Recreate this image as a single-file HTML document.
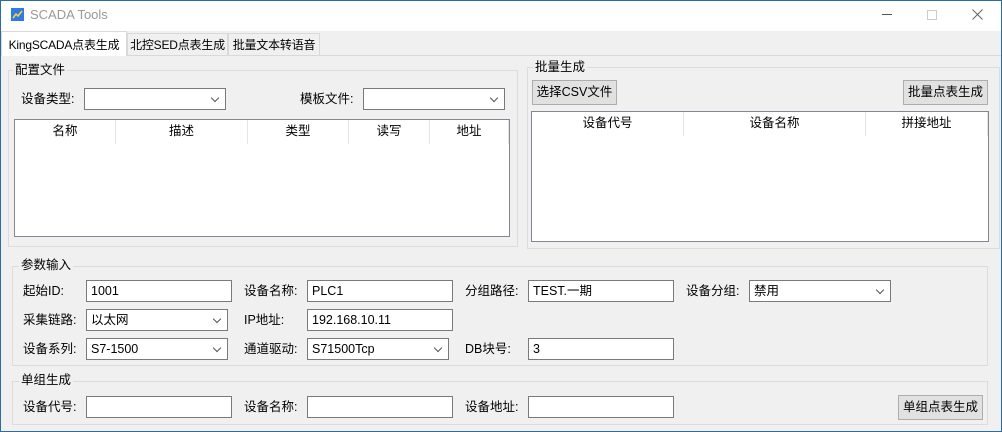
<!DOCTYPE html>
<html><head><meta charset="utf-8"><style>
*{box-sizing:border-box;margin:0;padding:0}
body{width:1002px;height:432px;overflow:hidden;background:#f0f0f0;font-family:"Liberation Sans","Noto Sans CJK SC",sans-serif;font-size:12.5px;color:#000;position:relative}
.a{position:absolute;white-space:nowrap}
.win{left:0;top:0;width:1002px;height:432px;border:1px solid #2b6ca6}
.title{left:1px;top:1px;width:1000px;height:30px;background:#fff}
.grp{border:1px solid #dcdcdc}
.gt{background:#f0f0f0;padding:0 2px;line-height:14px}
.inp{background:#fff;border:1px solid #7a7a7a;height:22px;line-height:20px;padding-left:4px}
.cmb:after{content:"";position:absolute;right:7px;top:6px;width:5px;height:5px;border-right:1px solid #555;border-bottom:1px solid #555;transform:rotate(45deg)}
.btn{background:#e1e1e1;border:1px solid #adadad;text-align:center;line-height:22px}
.tbl{background:#fff;border:1px solid #828790}
.th{position:absolute;top:0;height:24px;line-height:22px;text-align:center;border-right:1px solid #e5e5e5}
.lbl{line-height:22px}
.tab{top:33px;height:22px;line-height:22px;text-align:center;border:1px solid #d9d9d9;border-bottom:none;background:#f0f0f0;font-size:12px;letter-spacing:-0.2px}
</style></head><body>
<div class="a title"></div>
<div class="a win"></div>
<svg class="a" style="left:11px;top:8px" width="13" height="13"><rect width="13" height="13" fill="#2f7ae5"/><path d="M2 10 L5 6 L7 8 L11 3" stroke="#ffd633" stroke-width="1.5" fill="none"/></svg>
<div class="a" style="left:30px;top:7px;color:#999;font-size:13px">SCADA Tools</div>
<div class="a" style="left:882px;top:14px;width:10px;height:1px;background:#555"></div>
<div class="a" style="left:927px;top:10px;width:10px;height:10px;border:1px solid #ccc"></div>
<svg class="a" style="left:972px;top:9px" width="11" height="11"><path d="M0.5 0.5 L10.5 10.5 M10.5 0.5 L0.5 10.5" stroke="#666" stroke-width="1"/></svg>
<div class="a" style="left:1px;top:55px;width:1000px;height:1px;background:#d9d9d9"></div>
<div class="a tab" style="left:127px;width:101px">北控SED点表生成</div>
<div class="a tab" style="left:228px;width:92px">批量文本转语音</div>
<div class="a tab" style="left:1px;top:31px;width:126px;height:25px;background:#fff;line-height:26px">KingSCADA点表生成</div>

<div class="a grp" style="left:8px;top:70px;width:510px;height:177px"></div>
<div class="a gt" style="left:13px;top:63px">配置文件</div>
<div class="a lbl" style="left:21px;top:88px">设备类型:</div>
<div class="a inp cmb" style="left:84px;top:88px;width:142px"></div>
<div class="a lbl" style="left:300px;top:88px">模板文件:</div>
<div class="a inp cmb" style="left:363px;top:88px;width:142px"></div>
<div class="a tbl" style="left:14px;top:119px;width:496px;height:118px">
<div class="th" style="left:0;width:101px">名称</div>
<div class="th" style="left:101px;width:132px">描述</div>
<div class="th" style="left:233px;width:101px">类型</div>
<div class="th" style="left:334px;width:81px">读写</div>
<div class="th" style="left:415px;width:79px">地址</div>
</div>

<div class="a grp" style="left:527px;top:67px;width:473px;height:182px"></div>
<div class="a gt" style="left:533px;top:60px">批量生成</div>
<div class="a btn" style="left:532px;top:80px;width:85px;height:25px">选择CSV文件</div>
<div class="a btn" style="left:903px;top:80px;width:85px;height:25px">批量点表生成</div>
<div class="a tbl" style="left:531px;top:111px;width:458px;height:131px">
<div class="th" style="left:0;width:152px">设备代号</div>
<div class="th" style="left:152px;width:182px">设备名称</div>
<div class="th" style="left:334px;width:122px">拼接地址</div>
</div>

<div class="a grp" style="left:12px;top:266px;width:976px;height:100px"></div>
<div class="a gt" style="left:19px;top:258px">参数输入</div>
<div class="a lbl" style="left:23px;top:280px">起始ID:</div>
<div class="a inp" style="left:86px;top:280px;width:146px">1001</div>
<div class="a lbl" style="left:244px;top:280px">设备名称:</div>
<div class="a inp" style="left:307px;top:280px;width:146px">PLC1</div>
<div class="a lbl" style="left:465px;top:280px">分组路径:</div>
<div class="a inp" style="left:528px;top:280px;width:146px">TEST.一期</div>
<div class="a lbl" style="left:686px;top:280px">设备分组:</div>
<div class="a inp cmb" style="left:749px;top:280px;width:142px">禁用</div>
<div class="a lbl" style="left:23px;top:309px">采集链路:</div>
<div class="a inp cmb" style="left:86px;top:309px;width:142px">以太网</div>
<div class="a lbl" style="left:244px;top:309px">IP地址:</div>
<div class="a inp" style="left:307px;top:309px;width:146px">192.168.10.11</div>
<div class="a lbl" style="left:23px;top:338px">设备系列:</div>
<div class="a inp cmb" style="left:86px;top:338px;width:142px">S7-1500</div>
<div class="a lbl" style="left:244px;top:338px">通道驱动:</div>
<div class="a inp cmb" style="left:307px;top:338px;width:142px">S71500Tcp</div>
<div class="a lbl" style="left:465px;top:338px">DB块号:</div>
<div class="a inp" style="left:528px;top:338px;width:146px">3</div>

<div class="a grp" style="left:12px;top:381px;width:976px;height:44px"></div>
<div class="a gt" style="left:19px;top:373px">单组生成</div>
<div class="a lbl" style="left:23px;top:396px">设备代号:</div>
<div class="a inp" style="left:86px;top:396px;width:146px"></div>
<div class="a lbl" style="left:244px;top:396px">设备名称:</div>
<div class="a inp" style="left:307px;top:396px;width:146px"></div>
<div class="a lbl" style="left:465px;top:396px">设备地址:</div>
<div class="a inp" style="left:528px;top:396px;width:146px"></div>
<div class="a btn" style="left:898px;top:395px;width:85px;height:25px">单组点表生成</div>
</body></html>
